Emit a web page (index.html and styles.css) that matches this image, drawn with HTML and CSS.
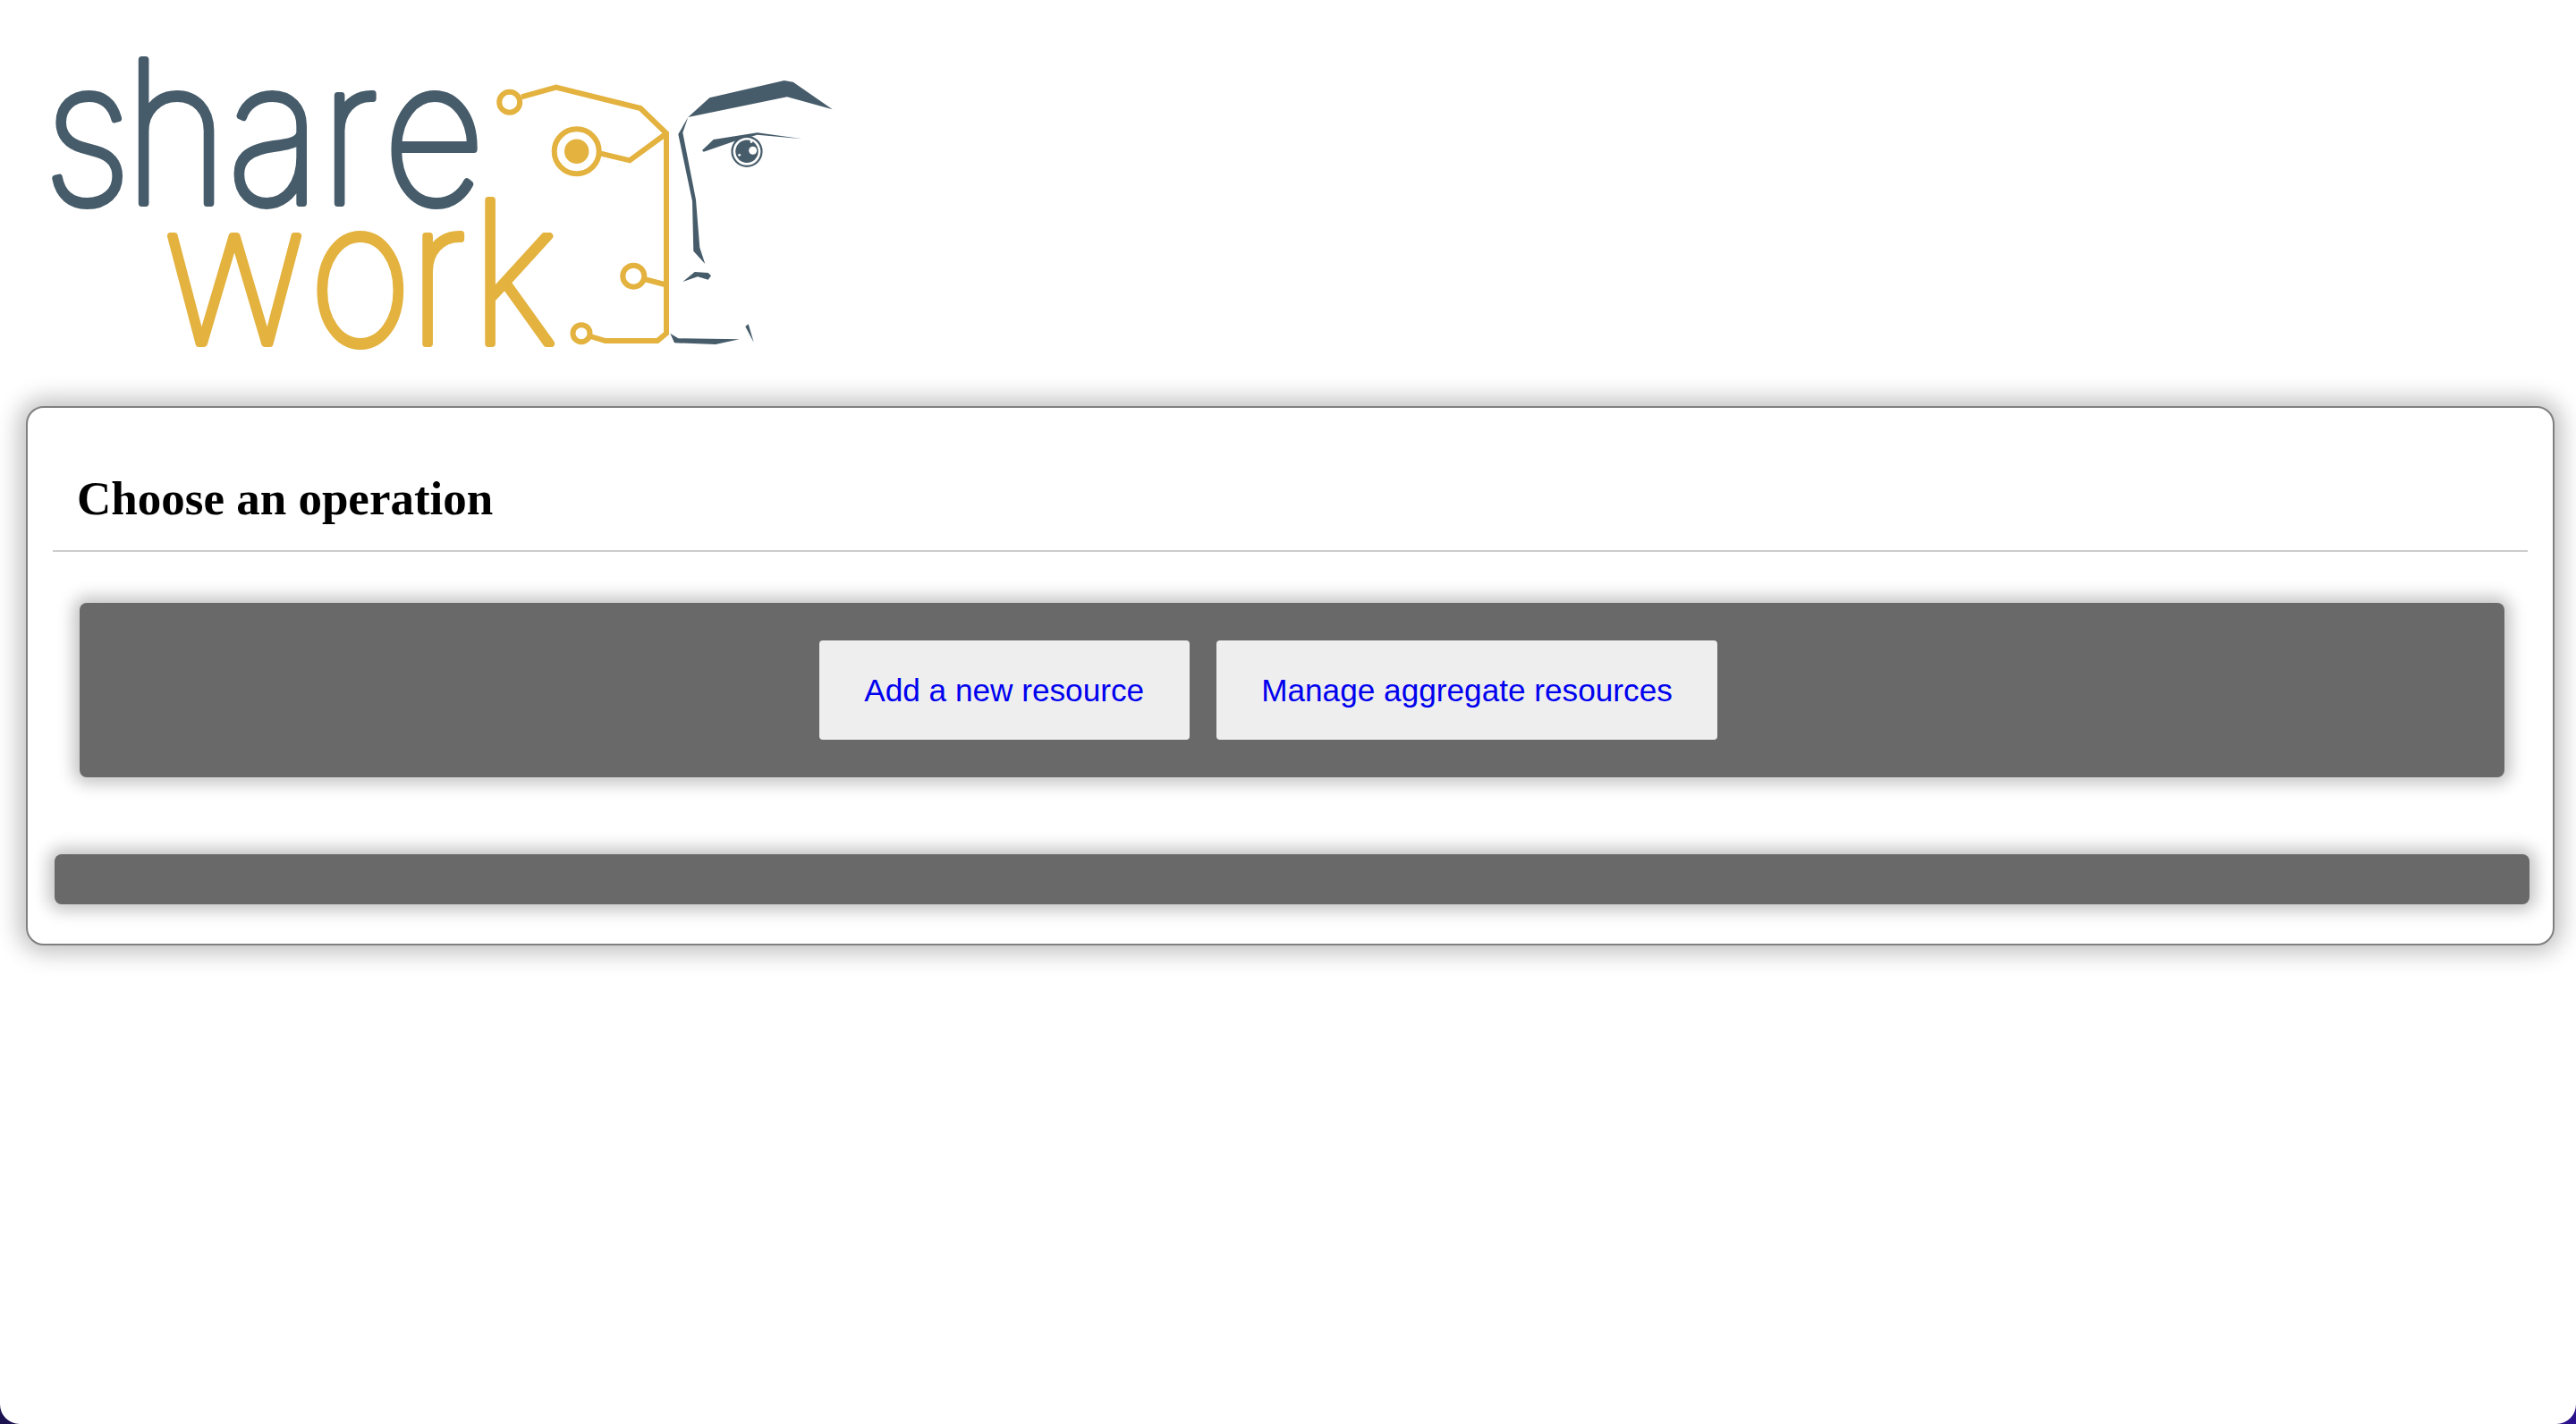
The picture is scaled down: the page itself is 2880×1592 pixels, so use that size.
FILE: index.html
```html
<!DOCTYPE html>
<html lang="en">
<head>
<meta charset="utf-8">
<title>Sharework</title>
<link rel="stylesheet" href="styles.css">
</head>
<body>
<div class="page">
  <header class="brand">
    <svg class="logo" viewBox="0 0 960 454" width="960" height="454" role="img" aria-label="Sharework logo">
      <text class="word word-share" transform="translate(0 227) scale(.9 1)" x="54.2 154.7 282.7 398 476">share</text>
      <text class="word word-work" transform="translate(0 384) scale(.9 1)" x="202.3 384 507.4 585.2">work</text>
      <g class="circuit">
        <circle cx="569.7" cy="114.3" r="11.5"/>
        <polyline points="583,108.3 621.7,97.7 716,121 745,149 745,372.7 735,381 676.7,381 660,376"/>
        <circle cx="644.7" cy="169.3" r="25"/>
        <polyline points="671.7,171.7 704,179.3 744,150"/>
        <circle cx="708.3" cy="308.7" r="12"/>
        <line x1="721.7" y1="312.3" x2="745" y2="318.5"/>
        <circle cx="650" cy="372.7" r="9.5"/>
      </g>
      <circle class="gold" cx="644.7" cy="169.3" r="13.7"/>
      <g class="face">
        <polygon points="769.3,131 793.3,109.3 876.7,90 886.7,91.7 930.7,122.3 880,108.3"/>
        <polygon points="769.3,131 758.3,150 774,225 775.3,280.7 788.3,295 782.3,276.7 778,223.3 763.3,148.3"/>
        <polygon points="785,168 797.7,156 846.7,148.3 896.7,155.3 846.7,150.7 820,158.3 786.7,169.7"/>
        <circle class="eye-ring" cx="835" cy="169.3" r="16.5"/>
        <circle cx="835" cy="169.3" r="12.7"/>
        <circle class="glint" cx="841.7" cy="168.3" r="4.5"/>
        <circle class="glint" cx="826.7" cy="173.3" r="1.4"/>
        <circle class="glint" cx="840" cy="158.5" r="1.4"/>
        <polygon points="763.3,315 776.7,304 791.7,305 795,308.3 791.7,312.7 780,309.3"/>
        <polygon points="749.3,372.7 758.3,378.3 826.7,379.3 800,385 754,383.3"/>
        <polygon points="833.3,365 836.7,362.3 842.7,382.7"/>
      </g>
    </svg>
  </header>
  <main class="panel">
    <h2 class="title">Choose an operation</h2>
    <nav class="actions">
      <a class="action" href="#add">Add a new resource</a>
      <a class="action" href="#manage">Manage aggregate resources</a>
    </nav>
    <div class="footer-bar"></div>
  </main>
</div>
</body>
</html>
```
FILE: styles.css
```css
html {
  background: linear-gradient(to right, #1b1450, #2a128c);
}
body {
  margin: 0;
}
.page {
  height: 1592px;
  box-sizing: border-box;
  background: #fff;
  border-radius: 0 0 22px 22px;
  overflow: hidden;
  padding: 0 24px 0 29px;
}
.brand {
  margin-left: -29px;
  height: 454px;
}
.logo {
  display: block;
}
.word {
  font-family: Inter, "Noto Sans", sans-serif;
  font-size: 220px;
  font-weight: 100;
  stroke-width: 8px;
  stroke-linejoin: round;
}
.word-share {
  fill: #475c6a;
  stroke: #475c6a;
}
.word-work {
  fill: #e3b23f;
  stroke: #e3b23f;
}
.circuit {
  fill: none;
  stroke: #e3b23f;
  stroke-width: 6px;
}
.gold {
  fill: #e3b23f;
}
.face {
  fill: #475c6a;
}
.eye-ring {
  fill: #fff;
  stroke: #475c6a;
  stroke-width: 2.2px;
}
.glint {
  fill: #fff;
}
.panel {
  box-sizing: border-box;
  height: 603px;
  padding: 0 28px;
  background: #fff;
  border: 2px solid #808080;
  border-radius: 20px;
  box-shadow: 0 0 26px 8px #c0c0c0;
}
.title {
  margin: 0;
  padding: 71px 0 28px 27px;
  border-bottom: 2px solid #ccc;
  font: bold 53px/60px "Liberation Serif", serif;
  color: #000;
}
.actions {
  display: flex;
  justify-content: center;
  gap: 30px;
  margin: 57px 26px 0 30px;
  padding: 42px 53px 42px 0;
  background: #696969;
  border-radius: 8px;
  box-shadow: 0 0 18px 7px #c4c4c4;
}
.action {
  display: flex;
  align-items: center;
  height: 111px;
  padding: 0 50.5px;
  background: #eee;
  border-radius: 4px;
  font: 35.2px "Liberation Sans", sans-serif;
  color: #0000ee;
  text-decoration: none;
}
.footer-bar {
  height: 56px;
  margin: 86px -2px 0 2px;
  background: #696969;
  border-radius: 8px;
  box-shadow: 0 0 18px 7px #c4c4c4;
}
```
